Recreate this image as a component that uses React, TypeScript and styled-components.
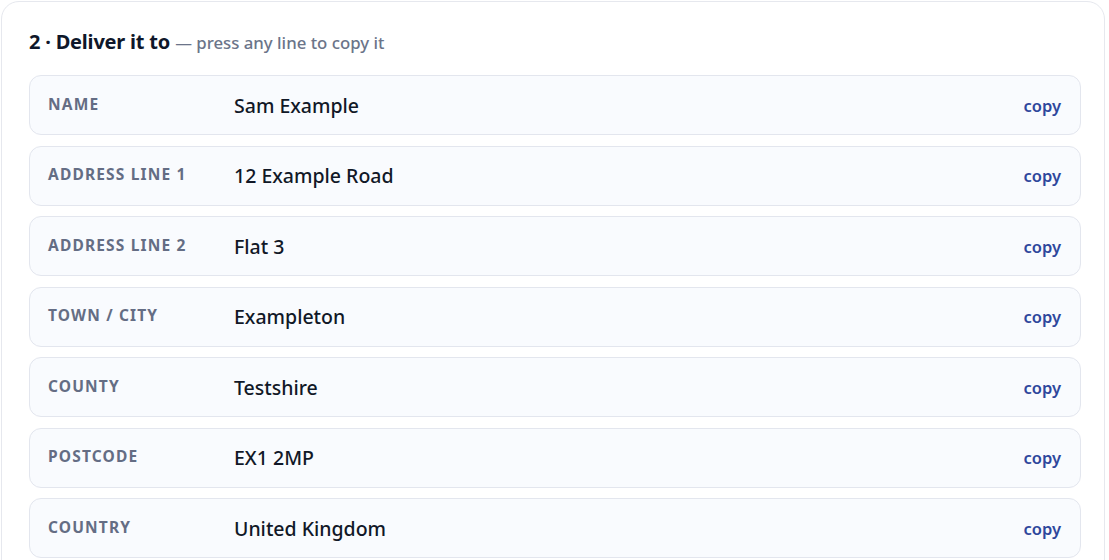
import styled, { createGlobalStyle } from "styled-components";

const GlobalStyle = createGlobalStyle`
  html, body {
    margin: 0;
    padding: 0;
    background: #ffffff;
    font-family: "Noto Sans", "Open Sans", "Liberation Sans", sans-serif;
    overflow: hidden;
  }
`;

const fields = [
  { label: "Name", value: "Sam Example" },
  { label: "Address line 1", value: "12 Example Road" },
  { label: "Address line 2", value: "Flat 3" },
  { label: "Town / City", value: "Exampleton" },
  { label: "County", value: "Testshire" },
  { label: "Postcode", value: "EX1 2MP" },
  { label: "Country", value: "United Kingdom" },
];

const Page = styled.div`
  padding: 1px 4px 0 1px;
`;

const Card = styled.section`
  background: #ffffff;
  border: 1px solid #e6e8ee;
  border-radius: 18px;
  padding: 24px 23px 28px 27px;
`;

const Heading = styled.h2`
  margin: 0 0 16px;
  font-size: 20px;
  line-height: 32px;
  font-weight: 700;
  color: #0f172a;
  letter-spacing: -0.01em;
`;

const Hint = styled.span`
  font-size: 16.8px;
  font-weight: 500;
  letter-spacing: 0;
  color: #6b7489;
`;

const List = styled.div`
  display: flex;
  flex-direction: column;
  gap: 10.5px;
`;

const Row = styled.button`
  display: grid;
  grid-template-columns: 186px 1fr auto;
  align-items: center;
  width: 100%;
  height: 60px;
  padding: 0 19px 0 18px;
  background: #f9fbfe;
  border: 1px solid #e3e6ee;
  border-radius: 12px;
  font-family: inherit;
  text-align: left;
  cursor: pointer;
`;

const Label = styled.span`
  font-size: 15.5px;
  font-weight: 700;
  letter-spacing: 0.075em;
  text-transform: uppercase;
  color: #646d84;
  margin-top: -3px;
`;

const Value = styled.span`
  font-size: 19.5px;
  font-weight: 500;
  color: #111827;
`;

const Copy = styled.span`
  font-size: 16.5px;
  font-weight: 600;
  color: #2e479c;
`;

export default function App() {
  return (
    <>
      <GlobalStyle />
      <Page>
        <Card>
          <Heading>
            2 · Deliver it to <Hint>— press any line to copy it</Hint>
          </Heading>
          <List>
            {fields.map((f) => (
              <Row key={f.label} type="button">
                <Label>{f.label}</Label>
                <Value>{f.value}</Value>
                <Copy>copy</Copy>
              </Row>
            ))}
          </List>
        </Card>
      </Page>
    </>
  );
}
